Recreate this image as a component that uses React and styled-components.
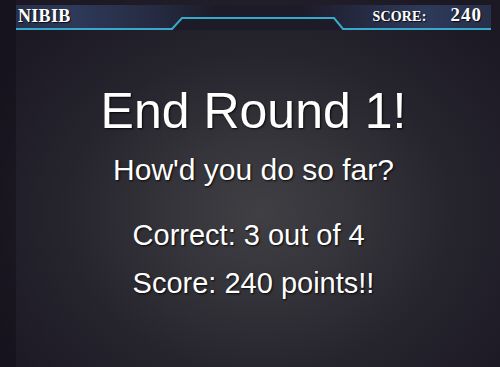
import React from 'react'
import styled, { createGlobalStyle } from 'styled-components'

const GlobalStyle = createGlobalStyle`
  html, body {
    margin: 0;
    padding: 0;
    background: #1a1722;
  }
`

const Page = styled.div`
  width: 500px;
  height: 367px;
  display: flex;
  overflow: hidden;
  background: radial-gradient(ellipse 62% 70% at 52% 58%, #403f44 0%, #35343a 30%, #26242d 62%, #1c1925 100%);
  font-family: 'Liberation Sans', Arial, sans-serif;
`

const Gutter = styled.div`
  width: 16px;
  flex: none;
  background: rgba(12, 10, 18, 0.35);
`

const Stage = styled.div`
  width: 475px;
  flex: none;
  display: flex;
  flex-direction: column;
`

const Header = styled.header`
  position: relative;
  height: 30px;
  display: flex;
  align-items: flex-end;
  justify-content: space-between;
  padding: 0 9px 5px 2px;
  box-sizing: border-box;
  color: #fff;
  font-family: 'Liberation Serif', 'Times New Roman', serif;
  font-weight: bold;
  text-shadow: 1px 1px 1px rgba(0, 0, 0, 0.8);
`

const Trim = styled.svg`
  position: absolute;
  inset: 0;
  z-index: 0;
`

const Brand = styled.span`
  position: relative;
  font-size: 18px;
  line-height: 18px;
  letter-spacing: 0.3px;
`

const ScoreBox = styled.div`
  position: relative;
  display: flex;
  align-items: baseline;
  gap: 24px;
`

const ScoreLabel = styled.span`
  font-size: 14px;
  line-height: 16px;
  letter-spacing: 0.2px;
`

const ScoreValue = styled.span`
  font-size: 19px;
  line-height: 18px;
  letter-spacing: 1px;
`

const Content = styled.main`
  flex: 1;
  display: flex;
  flex-direction: column;
  align-items: center;
  color: #fff;
  text-shadow: 1px 1px 2px rgba(0, 0, 0, 0.85);
`

const Title = styled.h1`
  margin: 53px 0 0;
  font-size: 50px;
  font-weight: normal;
  line-height: 56px;
`

const Subtitle = styled.p`
  margin: 14px 0 0;
  font-size: 30px;
  line-height: 34px;
`

const Stats = styled.div`
  margin-top: 31px;
  display: flex;
  flex-direction: column;
  gap: 14px;
  align-self: center;
`

const Stat = styled.div`
  font-size: 29px;
  line-height: 34px;
`

export default function App() {
  return (
    <Page>
      <GlobalStyle />
      <Gutter />
      <Stage>
        <Header>
          <Trim width="475" height="30" viewBox="0 0 475 30">
            <defs>
              <linearGradient id="barFill" x1="0" x2="1" y1="0" y2="0">
                <stop offset="0" stopColor="#27304a" />
                <stop offset="0.12" stopColor="#2e3a5a" />
                <stop offset="0.3" stopColor="#252a40" />
                <stop offset="0.42" stopColor="#1d1b29" />
                <stop offset="0.6" stopColor="#1d1b29" />
                <stop offset="0.74" stopColor="#262c44" />
                <stop offset="0.86" stopColor="#2e3a5a" />
                <stop offset="1" stopColor="#27304a" />
              </linearGradient>
            </defs>
            <rect x="0" y="5" width="475" height="25" fill="url(#barFill)" />
            <polygon points="157,30 166,18 319,18 327,30" fill="#1d1b28" />
            <polyline
              points="0,29 156,29 166,18 318,18 327,29 475,29"
              fill="none"
              stroke="#37a9cb"
              strokeWidth="2"
            />
          </Trim>
          <Brand>NIBIB</Brand>
          <ScoreBox>
            <ScoreLabel>SCORE:</ScoreLabel>
            <ScoreValue>240</ScoreValue>
          </ScoreBox>
        </Header>
        <Content>
          <Title>End Round 1!</Title>
          <Subtitle>How'd you do so far?</Subtitle>
          <Stats>
            <Stat>Correct: 3 out of 4</Stat>
            <Stat>Score: 240 points!!</Stat>
          </Stats>
        </Content>
      </Stage>
    </Page>
  )
}
